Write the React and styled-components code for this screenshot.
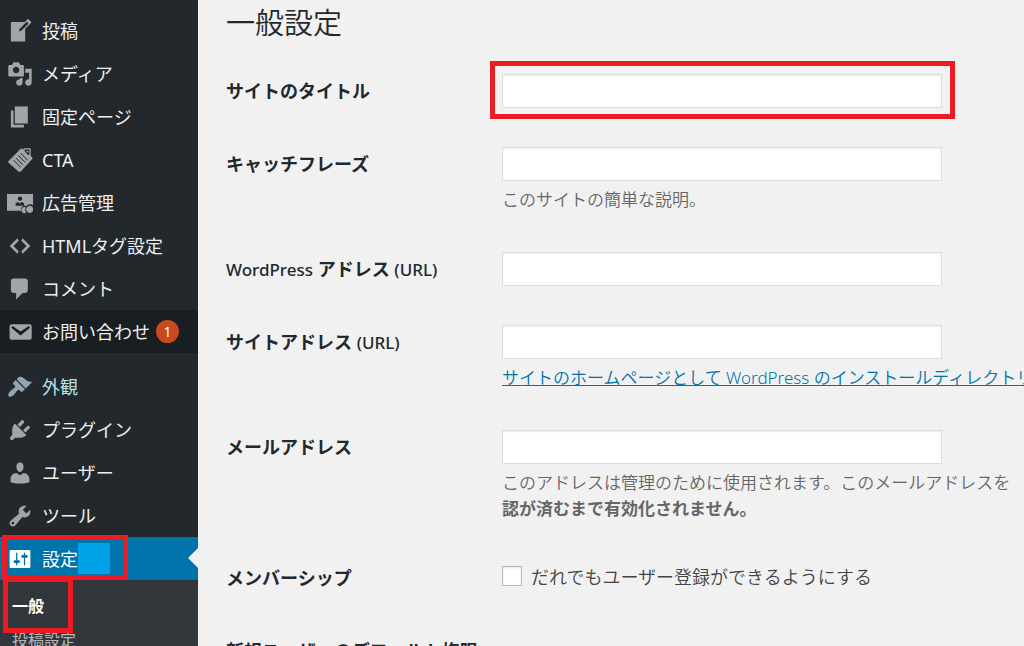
import React from "react";
import styled, { createGlobalStyle, css } from "styled-components";

const GlobalStyle = createGlobalStyle`
  * {
    box-sizing: border-box;
  }

  body {
    margin: 0;
    background: #f1f1f1;
    color: #23282d;
    font-family: "Noto Sans", "Noto Sans CJK JP", sans-serif;
    font-size: 18px;
  }
`;

const Shell = styled.div`
  display: flex;
  height: 100vh;
  overflow: hidden;
`;

const Sidebar = styled.nav`
  flex: 0 0 198px;
  padding-top: 9px;
  background: #23282d;
`;

const MenuList = styled.ul`
  margin: 0;
  padding: 0;
  list-style: none;
`;

const MenuItem = styled.li`
  position: relative;
  margin-top: ${(p) => (p.$separated ? "12px" : "0")};
`;

const MenuLink = styled.a`
  position: relative;
  display: flex;
  align-items: center;
  height: 43px;
  padding-left: 7px;
  color: #eee;
  line-height: 26px;
  text-decoration: none;
  white-space: nowrap;

  svg {
    flex: none;
    width: 26px;
    height: 26px;
    margin-right: 9px;
    fill: #a0a5aa;
  }

  ${(p) =>
    p.$tone === "open" &&
    css`
      background: #191e23;
    `}

  ${(p) =>
    p.$tone === "hover" &&
    css`
      color: #b4e0ea;

      svg {
        fill: #93a6b0;
      }
    `}

  ${(p) =>
    p.$tone === "current" &&
    css`
      background: #0073aa;
      color: #fff;

      svg {
        fill: #fff;
      }

      &::after {
        content: "";
        position: absolute;
        top: 11px;
        right: 0;
        border: 10px solid transparent;
        border-left-width: 0;
        border-right-color: #f1f1f1;
      }
    `}
`;

const Badge = styled.span`
  width: 23px;
  height: 23px;
  margin-left: 6px;
  border-radius: 50%;
  background: #ca4a1f;
  color: #fff;
  font-size: 14px;
  line-height: 23px;
  text-align: center;
`;

const Patch = styled.span`
  width: 32px;
  height: 31px;
  background: #00a2e8;
`;

const Marker = styled.span`
  position: absolute;
  inset: ${(p) => p.$inset};
  z-index: 1;
  border: 5px solid #ed1c24;
  pointer-events: none;
`;

const SubMenu = styled(MenuList)`
  padding: 9px 0;
  background: #32373c;
`;

const SubLink = styled.a`
  display: block;
  padding-left: 12px;
  color: ${(p) => (p.$current ? "#fff" : "#b4b9be")};
  font-size: 16px;
  font-weight: ${(p) => (p.$current ? 700 : 400)};
  line-height: 34px;
  text-decoration: none;
`;

const Content = styled.main`
  flex: 1;
  min-width: 0;
  padding-left: 28px;
  overflow: hidden;
`;

const Title = styled.h1`
  margin: 0 0 9px;
  font-size: 29px;
  font-weight: 350;
  line-height: 46px;
`;

const Row = styled.div`
  display: grid;
  grid-template-columns: 236px minmax(0, 1fr);
  column-gap: 40px;
  align-items: ${(p) => (p.$centered ? "center" : "start")};
  padding: 19px 0 20px;
`;

const RowLabel = styled.label`
  width: 256px;
  font-weight: 700;
  line-height: 34px;
`;

const Latin = styled.span`
  font-size: 17px;
  font-weight: 500;
  line-height: 1;
`;

const Field = styled.div`
  position: relative;
  width: 440px;
`;

const TextInput = styled.input`
  display: block;
  width: 100%;
  height: 34px;
  padding: 3px 6px;
  border: 1px solid #ddd;
  background: #fff;
  box-shadow: inset 0 1px 2px rgba(0, 0, 0, 0.07);
  color: #32373c;
  font: inherit;
`;

const Description = styled.p`
  margin: 6px 0 0;
  color: #666;
  font-size: 17px;
  font-weight: 350;
  line-height: 26px;
  white-space: nowrap;

  a {
    color: #0073aa;
  }

  strong {
    font-weight: 700;
  }
`;

const CheckLabel = styled.label`
  display: flex;
  align-items: center;
  gap: 9px;
  height: 34px;
  padding-bottom: 4px;
  color: #444;
  font-weight: 350;
`;

const Checkbox = styled.input`
  appearance: none;
  width: 20px;
  height: 20px;
  margin: 0;
  border: 1px solid #b4b9be;
  background: #fff;
  box-shadow: inset 0 1px 2px rgba(0, 0, 0, 0.1);
`;

const RoleSelect = styled.select`
  width: 200px;
  height: 34px;
  border: 1px solid #ddd;
  background: #fff;
  font: inherit;
`;

const icons = {
  post: "M16.89 1.2l1.41 1.41c.39.39.39 1.02 0 1.41L14 8.33V18H3V3h10.67l1.8-1.8c.4-.39 1.03-.4 1.42 0zm-5.66 8.48l5.37-5.36-1.42-1.42-5.36 5.37-.71 2.12z",
  media:
    "M13 11V4c0-.55-.45-1-1-1h-1.67L9 1H5L3.67 3H2c-.55 0-1 .45-1 1v7c0 .55.45 1 1 1h10c.55 0 1-.45 1-1zM7 4.5c1.38 0 2.5 1.12 2.5 2.5S8.38 9.5 7 9.5 4.5 8.38 4.5 7 5.62 4.5 7 4.5zM14 6h5v10.5c0 1.38-1.12 2.5-2.5 2.5S14 17.88 14 16.5s1.12-2.5 2.5-2.5c.17 0 .34.02.5.05V9h-3V6zm-4 8.05V13h2v3.5c0 1.38-1.12 2.5-2.5 2.5S7 17.88 7 16.5 8.12 14 9.5 14c.17 0 .34.02.5.05z",
  page: "M6 15V2h10v13H6zm-1 1h8v2H3V5h2v11z",
  cta: "M1 11L10.8 1.2 12.6 1.8 13.4 1H18.2V6.6L19.8 8.8 10.4 19 9 19 1 12zM13.6 2v1.4l3 3 .6-.6V2zM14.4 2.8h2v2zM10.7 4.6l-.4.4 5.4 5.4.4-.4zM8.9 6.4l-.4.4 5.4 5.4.4-.4zM7.1 8.2l-.4.4 5.4 5.4.4-.4zM5.3 10l-.4.4 5.4 5.4.4-.4z",
  ads: "M0 3h20v9a3.2 3.2 0 0 0-5 .4 3 3 0 0 0-4.2 3.6H0zM10 5a1.7 1.7 0 1 0 .01 0zM6.6 12.2h6.6v-2l-2-1-1.3 1.2-1.3-1.2-2 1zM13.4 13a2.4 2.4 0 1 0 1.3 4.4 4.2 4.2 0 0 1-.2-4.1 2.4 2.4 0 0 0-1.1-.3zM17.5 12.2a2.7 2.7 0 1 0 .01 0z",
  code: "M9 6l-4 4 4 4-1 2-6-6 6-6zm2 8l4-4-4-4 1-2 6 6-6 6z",
  comments:
    "M5 2h9c1.1 0 2 .9 2 2v7c0 1.1-.9 2-2 2h-2l-5 5v-5H5c-1.1 0-2-.9-2-2V4c0-1.1.9-2 2-2z",
  email:
    "M3.87 4h13.25C18.37 4 19 4.59 19 5.79v8.42c0 1.19-.63 1.79-1.88 1.79H3.87c-1.25 0-1.88-.6-1.88-1.79V5.79c0-1.2.63-1.79 1.88-1.79zm6.62 8.6l6.74-5.53c.24-.2.43-.66.13-1.07-.29-.41-.82-.42-1.17-.17l-5.7 3.86L4.8 5.83c-.35-.25-.88-.24-1.17.17-.3.41-.11.87.13 1.07z",
  appearance:
    "M14.48 11.06L7.41 3.99l1.5-1.5c.5-.56 2.3-.47 3.51.32 1.21.8 1.43 1.28 2.91 2.1 1.18.64 2.45 1.26 4.45.85zm-.71.71L6.7 4.7 4.93 6.47c-.39.39-.39 1.02 0 1.41l1.06 1.06c.39.39.39 1.03 0 1.42-.6.6-1.43 1.11-2.21 1.69-.35.26-.7.53-1.01.84C1.43 14.23.4 16.08 1.4 17.07c.99 1 2.84-.03 4.18-1.36.31-.31.58-.66.85-1.02.57-.78 1.08-1.61 1.69-2.21.39-.39 1.02-.39 1.41 0l1.06 1.06c.39.39 1.02.39 1.41 0z",
  plugins:
    "M13.11 4.36L9.87 7.6 8 5.73l3.24-3.24c.35-.34 1.05-.2 1.56.32.52.51.66 1.21.31 1.55zm-8 1.77l.91-1.12 9.01 9.01-1.19.84c-.71.71-2.63 1.16-3.82 1.16H6.14L4.9 17.26c-.59.59-1.54.59-2.12 0-.59-.58-.59-1.53 0-2.12l1.24-1.24v-3.88c0-1.13.4-3.19 1.09-3.89zm7.26 3.97l3.24-3.24c.34-.35 1.04-.21 1.55.31.52.51.66 1.21.31 1.55l-3.24 3.25z",
  users:
    "M10 9.25c-2.27 0-2.73-3.44-2.73-3.44C7 4.02 7.82 2 9.97 2c2.16 0 2.98 2.02 2.71 3.81 0 0-.41 3.44-2.68 3.44zm0 2.57L12.72 10c2.39 0 4.52 2.33 4.52 4.53v2.49s-3.65 1.13-7.24 1.13c-3.65 0-7.24-1.13-7.24-1.13v-2.49c0-2.25 1.94-4.48 4.47-4.48z",
  tools:
    "M16.68 9.77c-1.34 1.34-3.3 1.67-4.95.99l-5.41 6.52c-.99.99-2.59.99-3.58 0s-.99-2.59 0-3.57l6.52-5.42c-.68-1.65-.35-3.61.99-4.95 1.28-1.28 3.12-1.62 4.72-1.06l-2.89 2.89 2.82 2.82 2.86-2.87c.53 1.58.18 3.39-1.08 4.65zM3.81 16.21c.4.39 1.04.39 1.43 0 .4-.4.4-1.04 0-1.43-.39-.4-1.03-.4-1.43 0-.39.39-.39 1.03 0 1.43z",
  settings:
    "M18 16V4c0-.55-.45-1-1-1H3c-.55 0-1 .45-1 1v12c0 .55.45 1 1 1h14c.55 0 1-.45 1-1zM8 11h1c.55 0 1 .45 1 1s-.45 1-1 1H8v1.5c0 .28-.22.5-.5.5s-.5-.22-.5-.5V13H6c-.55 0-1-.45-1-1s.45-1 1-1h1V5.5c0-.28.22-.5.5-.5s.5.22.5.5V11zm5-2h-1c-.55 0-1-.45-1-1s.45-1 1-1h1V5.5c0-.28.22-.5.5-.5s.5.22.5.5V7h1c.55 0 1 .45 1 1s-.45 1-1 1h-1v5.5c0 .28-.22.5-.5.5s-.5-.22-.5-.5V9z",
};

const menu = [
  { icon: "post", text: "投稿" },
  { icon: "media", text: "メディア" },
  { icon: "page", text: "固定ページ" },
  { icon: "cta", text: "CTA" },
  { icon: "ads", text: "広告管理" },
  { icon: "code", text: "HTMLタグ設定" },
  { icon: "comments", text: "コメント" },
  { icon: "email", text: "お問い合わせ", tone: "open", count: 1 },
  { icon: "appearance", text: "外観", tone: "hover", separated: true },
  { icon: "plugins", text: "プラグイン" },
  { icon: "users", text: "ユーザー" },
  { icon: "tools", text: "ツール" },
];

const Icon = ({ name }) => (
  <svg viewBox="0 0 20 20" aria-hidden="true">
    <path fillRule="evenodd" d={icons[name]} />
  </svg>
);

const TextRow = ({ id, label, type = "text", marked, children }) => (
  <Row>
    <RowLabel htmlFor={id}>{label}</RowLabel>
    <div>
      <Field>
        <TextInput id={id} type={type} />
        {marked && <Marker $inset="-13px -13px -11px -12px" />}
      </Field>
      {children}
    </div>
  </Row>
);

const App = () => {
  return (
    <>
      <GlobalStyle />
      <Shell>
        <Sidebar>
          <MenuList>
            {menu.map((item) => (
              <MenuItem key={item.icon} $separated={item.separated}>
                <MenuLink href="#" $tone={item.tone}>
                  <Icon name={item.icon} />
                  {item.text}
                  {item.count && <Badge>{item.count}</Badge>}
                </MenuLink>
              </MenuItem>
            ))}
            <MenuItem>
              <MenuLink href="#" $tone="current">
                <Icon name="settings" />
                設定
                <Patch />
                <Marker $inset="-2px 70px 0 2px" />
              </MenuLink>
              <SubMenu>
                <MenuItem>
                  <SubLink href="#" $current>
                    一般
                  </SubLink>
                  <Marker $inset="-12px 125px -10px 3px" />
                </MenuItem>
                <MenuItem>
                  <SubLink href="#">投稿設定</SubLink>
                </MenuItem>
              </SubMenu>
            </MenuItem>
          </MenuList>
        </Sidebar>
        <Content>
          <Title>一般設定</Title>
          <TextRow id="blogname" label="サイトのタイトル" marked />
          <TextRow id="tagline" label="キャッチフレーズ">
            <Description>このサイトの簡単な説明。</Description>
          </TextRow>
          <TextRow
            id="siteurl"
            type="url"
            label={
              <>
                <Latin>WordPress</Latin> アドレス <Latin>(URL)</Latin>
              </>
            }
          />
          <TextRow
            id="home"
            type="url"
            label={
              <>
                サイトアドレス <Latin>(URL)</Latin>
              </>
            }
          >
            <Description>
              <a href="#">
                サイトのホームページとして WordPress のインストールディレクトリ
              </a>
            </Description>
          </TextRow>
          <TextRow id="email" type="email" label="メールアドレス">
            <Description>
              このアドレスは管理のために使用されます。このメールアドレスを
              <br />
              <strong>認が済むまで有効化されません。</strong>
            </Description>
          </TextRow>
          <Row>
            <RowLabel htmlFor="membership">メンバーシップ</RowLabel>
            <CheckLabel>
              <Checkbox id="membership" type="checkbox" />
              だれでもユーザー登録ができるようにする
            </CheckLabel>
          </Row>
          <Row $centered>
            <RowLabel htmlFor="role">
              新規ユーザーのデフォルト権限
              <br />
              グループ
            </RowLabel>
            <RoleSelect id="role">
              <option>購読者</option>
            </RoleSelect>
          </Row>
        </Content>
      </Shell>
    </>
  );
};

export default App;
